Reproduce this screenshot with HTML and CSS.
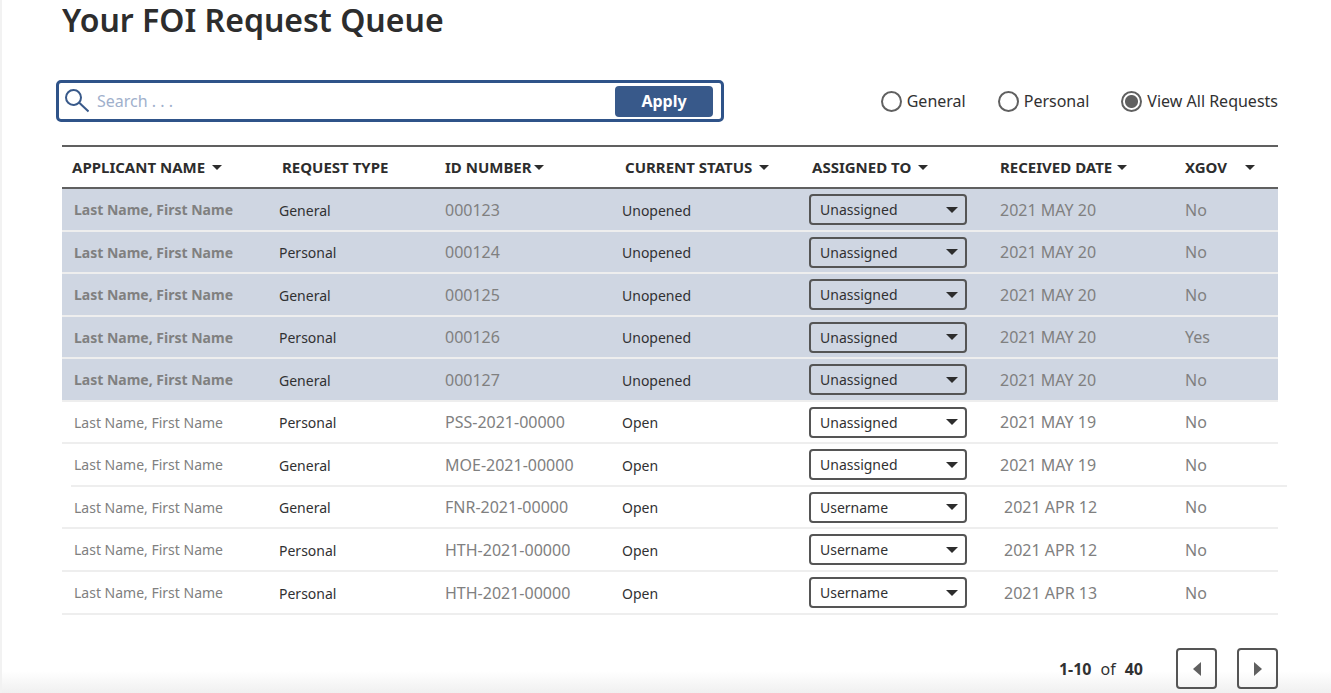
FILE: index.html
```html
<!DOCTYPE html>
<html lang="en">
<head>
<meta charset="utf-8">
<title>Your FOI Request Queue</title>
<link rel="stylesheet" href="styles.css">
</head>
<body>
<svg class="defs" aria-hidden="true">
  <symbol id="caret" viewBox="0 0 12 6"><path d="M0 0h12L6 6z"/></symbol>
</svg>
<main class="page">
  <h1 class="title">Your FOI Request Queue</h1>

  <div class="toolbar">
    <form class="search" role="search">
      <svg class="search-icon" viewBox="0 0 24 24" aria-hidden="true"><circle cx="8.500" cy="8.500" r="7.500"/><path d="M14 13.500l9.500 9"/></svg>
      <input class="search-input" type="text" placeholder="Search . . ." aria-label="Search">
      <button class="apply" type="button">Apply</button>
    </form>
    <div class="filters" role="radiogroup" aria-label="Request filter">
      <label class="filter"><input class="radio" type="radio" name="filter">General</label>
      <label class="filter"><input class="radio" type="radio" name="filter">Personal</label>
      <label class="filter"><input class="radio" type="radio" name="filter" checked>View All Requests</label>
    </div>
  </div>

  <table class="queue">
    <colgroup>
      <col class="col-name"><col class="col-type"><col class="col-id"><col class="col-status"><col class="col-assigned"><col class="col-date"><col class="col-xgov">
    </colgroup>
    <thead>
      <tr>
        <th class="h-name"><button class="sort" type="button">APPLICANT NAME<svg class="caret"><use href="#caret"/></svg></button></th>
        <th class="h-inset">REQUEST TYPE</th>
        <th><button class="sort sort-tight" type="button">ID NUMBER<svg class="caret"><use href="#caret"/></svg></button></th>
        <th class="h-inset"><button class="sort" type="button">CURRENT STATUS<svg class="caret"><use href="#caret"/></svg></button></th>
        <th class="h-inset"><button class="sort" type="button">ASSIGNED TO<svg class="caret"><use href="#caret"/></svg></button></th>
        <th><button class="sort sort-mid" type="button">RECEIVED DATE<svg class="caret"><use href="#caret"/></svg></button></th>
        <th><button class="sort sort-wide" type="button">XGOV<svg class="caret"><use href="#caret"/></svg></button></th>
      </tr>
    </thead>
    <tbody>
      <tr class="unopened">
        <td class="name">Last Name, First Name</td><td class="dark">General</td><td>000123</td><td class="dark">Unopened</td>
        <td><div class="assign"><select class="assign-select" aria-label="Assigned to"><option>Unassigned</option><option>Username</option></select><svg class="assign-caret"><use href="#caret"/></svg></div></td>
        <td>2021 MAY 20</td><td>No</td>
      </tr>
      <tr class="unopened">
        <td class="name">Last Name, First Name</td><td class="dark">Personal</td><td>000124</td><td class="dark">Unopened</td>
        <td><div class="assign"><select class="assign-select" aria-label="Assigned to"><option>Unassigned</option><option>Username</option></select><svg class="assign-caret"><use href="#caret"/></svg></div></td>
        <td>2021 MAY 20</td><td>No</td>
      </tr>
      <tr class="unopened">
        <td class="name">Last Name, First Name</td><td class="dark">General</td><td>000125</td><td class="dark">Unopened</td>
        <td><div class="assign"><select class="assign-select" aria-label="Assigned to"><option>Unassigned</option><option>Username</option></select><svg class="assign-caret"><use href="#caret"/></svg></div></td>
        <td>2021 MAY 20</td><td>No</td>
      </tr>
      <tr class="unopened">
        <td class="name">Last Name, First Name</td><td class="dark">Personal</td><td>000126</td><td class="dark">Unopened</td>
        <td><div class="assign"><select class="assign-select" aria-label="Assigned to"><option>Unassigned</option><option>Username</option></select><svg class="assign-caret"><use href="#caret"/></svg></div></td>
        <td>2021 MAY 20</td><td>Yes</td>
      </tr>
      <tr class="unopened">
        <td class="name">Last Name, First Name</td><td class="dark">General</td><td>000127</td><td class="dark">Unopened</td>
        <td><div class="assign"><select class="assign-select" aria-label="Assigned to"><option>Unassigned</option><option>Username</option></select><svg class="assign-caret"><use href="#caret"/></svg></div></td>
        <td>2021 MAY 20</td><td>No</td>
      </tr>
      <tr>
        <td class="name">Last Name, First Name</td><td class="dark">Personal</td><td>PSS-2021-00000</td><td class="dark">Open</td>
        <td><div class="assign"><select class="assign-select" aria-label="Assigned to"><option>Unassigned</option><option>Username</option></select><svg class="assign-caret"><use href="#caret"/></svg></div></td>
        <td>2021 MAY 19</td><td>No</td>
      </tr>
      <tr class="shifted-rule">
        <td class="name">Last Name, First Name</td><td class="dark">General</td><td>MOE-2021-00000</td><td class="dark">Open</td>
        <td><div class="assign"><select class="assign-select" aria-label="Assigned to"><option>Unassigned</option><option>Username</option></select><svg class="assign-caret"><use href="#caret"/></svg></div></td>
        <td>2021 MAY 19</td><td>No</td>
      </tr>
      <tr>
        <td class="name">Last Name, First Name</td><td class="dark">General</td><td>FNR-2021-00000</td><td class="dark">Open</td>
        <td><div class="assign"><select class="assign-select" aria-label="Assigned to"><option>Unassigned</option><option selected>Username</option></select><svg class="assign-caret"><use href="#caret"/></svg></div></td>
        <td class="date-inset">2021 APR 12</td><td>No</td>
      </tr>
      <tr>
        <td class="name">Last Name, First Name</td><td class="dark">Personal</td><td>HTH-2021-00000</td><td class="dark">Open</td>
        <td><div class="assign"><select class="assign-select" aria-label="Assigned to"><option>Unassigned</option><option selected>Username</option></select><svg class="assign-caret"><use href="#caret"/></svg></div></td>
        <td class="date-inset">2021 APR 12</td><td>No</td>
      </tr>
      <tr>
        <td class="name">Last Name, First Name</td><td class="dark">Personal</td><td>HTH-2021-00000</td><td class="dark">Open</td>
        <td><div class="assign"><select class="assign-select" aria-label="Assigned to"><option>Unassigned</option><option selected>Username</option></select><svg class="assign-caret"><use href="#caret"/></svg></div></td>
        <td class="date-inset">2021 APR 13</td><td>No</td>
      </tr>
    </tbody>
  </table>

  <nav class="pager" aria-label="Pagination">
    <p class="range"><b>1-10</b><span>of</span><b>40</b></p>
    <button class="page-btn" type="button" aria-label="Previous page"><svg class="arrow" viewBox="0 0 8 14"><path d="M8 0v14L0 7z"/></svg></button>
    <button class="page-btn" type="button" aria-label="Next page"><svg class="arrow" viewBox="0 0 8 14"><path d="M0 0v14l8-7z"/></svg></button>
  </nav>
</main>
</body>
</html>
```
FILE: styles.css
```css
* {
  box-sizing: border-box;
}

body {
  margin: 0;
  font-family: "Noto Sans", sans-serif;
  font-size: 16px;
  color: #313132;
  background: #fff;
}

button,
input,
select {
  font: inherit;
  color: inherit;
}

.defs {
  display: none;
}

.page {
  min-height: 100vh;
  padding: 0 53px 4px 60px;
  border-left: 2px solid #f2f2f2;
  background: linear-gradient(to top, #f0f0f0, #fff 22px);
}

.title {
  margin: 0 0 41px;
  font-size: 32px;
  line-height: 39px;
  font-weight: 600;
  color: #2d2d2d;
}

.toolbar {
  display: flex;
  align-items: center;
  justify-content: space-between;
  margin-left: -6px;
}

.search {
  display: flex;
  align-items: center;
  flex: 0 1 668px;
  height: 42px;
  padding: 0 8px 0 6px;
  border: 3px solid #2f5389;
  border-radius: 5px;
}

.search-icon {
  width: 24px;
  height: 24px;
  fill: none;
  stroke: #38598a;
  stroke-width: 2;
}

.search-input {
  flex: 1;
  min-width: 0;
  padding: 0 8px;
  border: 0;
  outline: 0;
  background: none;
}

.search-input::placeholder {
  color: #9fb0cc;
  opacity: 1;
}

.apply {
  width: 98px;
  height: 31px;
  padding: 0;
  border: 0;
  border-radius: 4px;
  background: #38598a;
  color: #fff;
  font-weight: 700;
}

.filters {
  display: flex;
  gap: 32px;
}

.filter {
  display: flex;
  align-items: center;
  gap: 5px;
}

.radio {
  appearance: none;
  width: 21px;
  height: 21px;
  margin: 0;
  border: 2px solid #606060;
  border-radius: 50%;
}

.radio:checked {
  background: radial-gradient(circle, #606060 6px, transparent 7px);
}

.queue {
  width: 100%;
  margin-top: 23px;
  table-layout: fixed;
  border-collapse: separate;
  border-spacing: 0;
  color: #808080;
}

.col-name { width: 217px; }
.col-type { width: 166px; }
.col-id { width: 177px; }
.col-status { width: 187px; }
.col-assigned { width: 191px; }
.col-date { width: 185px; }
.col-xgov { width: 93px; }

.queue th {
  height: 44px;
  padding: 0;
  border-top: 2px solid #606060;
  border-bottom: 2px solid #606060;
  font-size: 15px;
  font-weight: 700;
  text-align: left;
  white-space: nowrap;
  color: #2d2d2d;
}

.queue .h-name {
  padding-left: 10px;
}

.queue .h-inset {
  padding-left: 3px;
}

.sort {
  display: flex;
  align-items: center;
  gap: 7px;
  padding: 0;
  border: 0;
  background: none;
}

.sort-tight { gap: 2px; }
.sort-mid { gap: 5px; }
.sort-wide { gap: 18px; }

.caret {
  width: 10px;
  height: 5px;
  fill: #2d2d2d;
}

.queue td {
  height: 43px;
  padding: 0;
  border-bottom: 2px solid #eee;
  white-space: nowrap;
}

.queue tbody tr:nth-child(even) td {
  height: 42px;
}

.queue tbody tr:last-child td {
  height: 43px;
}

.queue .name {
  padding-left: 12px;
  font-size: 14px;
}

.queue .dark {
  padding-top: 1px;
  font-size: 14px;
  color: #313132;
}

.queue .date-inset {
  padding-left: 4px;
}

.unopened {
  background: #cfd6e2;
}

.unopened .name {
  font-weight: 700;
}

/* This row's rule starts and ends one step to the right of the table edge. */
.shifted-rule {
  position: relative;
}

.queue .shifted-rule td {
  border-bottom-color: transparent;
}

.shifted-rule::after {
  content: "";
  position: absolute;
  left: 9px;
  right: -9px;
  bottom: 0;
  height: 2px;
  background: #eee;
}

.assign {
  display: grid;
  width: 158px;
  align-items: center;
}

.assign-select,
.assign-caret {
  grid-area: 1 / 1;
}

.assign-select {
  appearance: none;
  width: 100%;
  height: 31px;
  padding: 0 9px;
  border: 2px solid #555;
  border-radius: 4px;
  background: none;
  font-size: 14px;
  color: #313132;
}

.assign-caret {
  justify-self: end;
  width: 12px;
  height: 6px;
  margin-right: 9px;
  fill: #2d2d2d;
  pointer-events: none;
}

.pager {
  display: flex;
  align-items: center;
  justify-content: flex-end;
  gap: 20px;
  margin-top: 33px;
}

.range {
  display: flex;
  gap: 9px;
  margin: 0 13px 0 0;
}

.page-btn {
  display: grid;
  place-items: center;
  width: 41px;
  height: 41px;
  padding: 0;
  border: 2px solid #555;
  border-radius: 4px;
  background: none;
}

.arrow {
  width: 8px;
  height: 14px;
  fill: #606060;
}
```
